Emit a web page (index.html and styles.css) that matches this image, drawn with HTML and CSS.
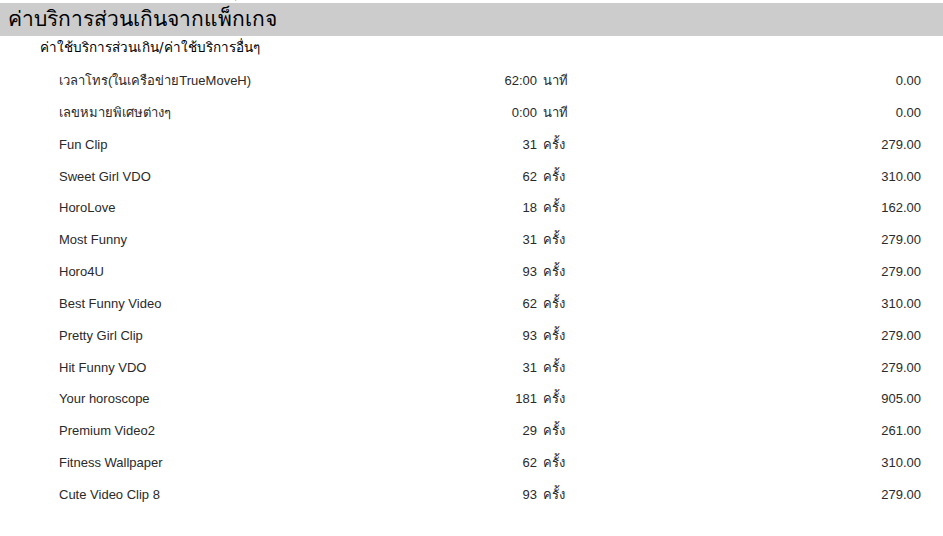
FILE: index.html
```html
<!DOCTYPE html>
<html lang="th">
<head>
<meta charset="utf-8">
<title>ค่าบริการส่วนเกินจากแพ็กเกจ</title>
<link rel="stylesheet" href="styles.css">
</head>
<body>
<div class="cut"><div class="cut-text">ดุ</div></div>
<div class="header">ค่าบริการส่วนเกินจากแพ็กเกจ</div>
<div class="subtitle">ค่าใช้บริการส่วนเกิน/ค่าใช้บริการอื่นๆ</div>
<div class="rows">
  <div class="row"><span class="name">เวลาโทร(ในเครือข่ายTrueMoveH)</span><span class="qty">62:00</span><span class="unit">นาที</span><span class="amt">0.00</span></div>
  <div class="row"><span class="name">เลขหมายพิเศษต่างๆ</span><span class="qty">0:00</span><span class="unit">นาที</span><span class="amt">0.00</span></div>
  <div class="row"><span class="name">Fun Clip</span><span class="qty">31</span><span class="unit">ครั้ง</span><span class="amt">279.00</span></div>
  <div class="row"><span class="name">Sweet Girl VDO</span><span class="qty">62</span><span class="unit">ครั้ง</span><span class="amt">310.00</span></div>
  <div class="row"><span class="name">HoroLove</span><span class="qty">18</span><span class="unit">ครั้ง</span><span class="amt">162.00</span></div>
  <div class="row"><span class="name">Most Funny</span><span class="qty">31</span><span class="unit">ครั้ง</span><span class="amt">279.00</span></div>
  <div class="row"><span class="name">Horo4U</span><span class="qty">93</span><span class="unit">ครั้ง</span><span class="amt">279.00</span></div>
  <div class="row"><span class="name">Best Funny Video</span><span class="qty">62</span><span class="unit">ครั้ง</span><span class="amt">310.00</span></div>
  <div class="row"><span class="name">Pretty Girl Clip</span><span class="qty">93</span><span class="unit">ครั้ง</span><span class="amt">279.00</span></div>
  <div class="row"><span class="name">Hit Funny VDO</span><span class="qty">31</span><span class="unit">ครั้ง</span><span class="amt">279.00</span></div>
  <div class="row"><span class="name">Your horoscope</span><span class="qty">181</span><span class="unit">ครั้ง</span><span class="amt">905.00</span></div>
  <div class="row"><span class="name">Premium Video2</span><span class="qty">29</span><span class="unit">ครั้ง</span><span class="amt">261.00</span></div>
  <div class="row"><span class="name">Fitness Wallpaper</span><span class="qty">62</span><span class="unit">ครั้ง</span><span class="amt">310.00</span></div>
  <div class="row"><span class="name">Cute Video Clip 8</span><span class="qty">93</span><span class="unit">ครั้ง</span><span class="amt">279.00</span></div>
</div>
</body>
</html>
```
FILE: styles.css
```css
html, body {
  margin: 0;
  padding: 0;
  background: #ffffff;
}
body {
  font-family: "Liberation Sans", "DejaVu Sans", sans-serif;
  color: #000;
  overflow: hidden;
}
.cut {
  height: 3px;
  overflow: hidden;
  padding-left: 229px;
}
.cut-text {
  font-size: 13px;
  line-height: 16px;
  margin-top: -15px;
  color: #555;
}
.header {
  height: 33px;
  line-height: 33px;
  background: #cccccc;
  padding-left: 8px;
  font-size: 21px;
  font-family: "DejaVu Sans", sans-serif;
}
.subtitle {
  height: 22px;
  line-height: 22px;
  padding-left: 40px;
  font-size: 13.5px;
  font-family: "DejaVu Sans", sans-serif;
}
.rows {
  padding-top: 7px;
  padding-left: 59px;
}
.row {
  display: grid;
  grid-template-columns: 381px 97px 66px 318px;
  height: 31.85px;
  line-height: 31.85px;
  font-size: 13px;
  color: #2a2a2a;
}
.qty {
  text-align: right;
}
.unit {
  padding-left: 6px;
}
.amt {
  text-align: right;
}
```
